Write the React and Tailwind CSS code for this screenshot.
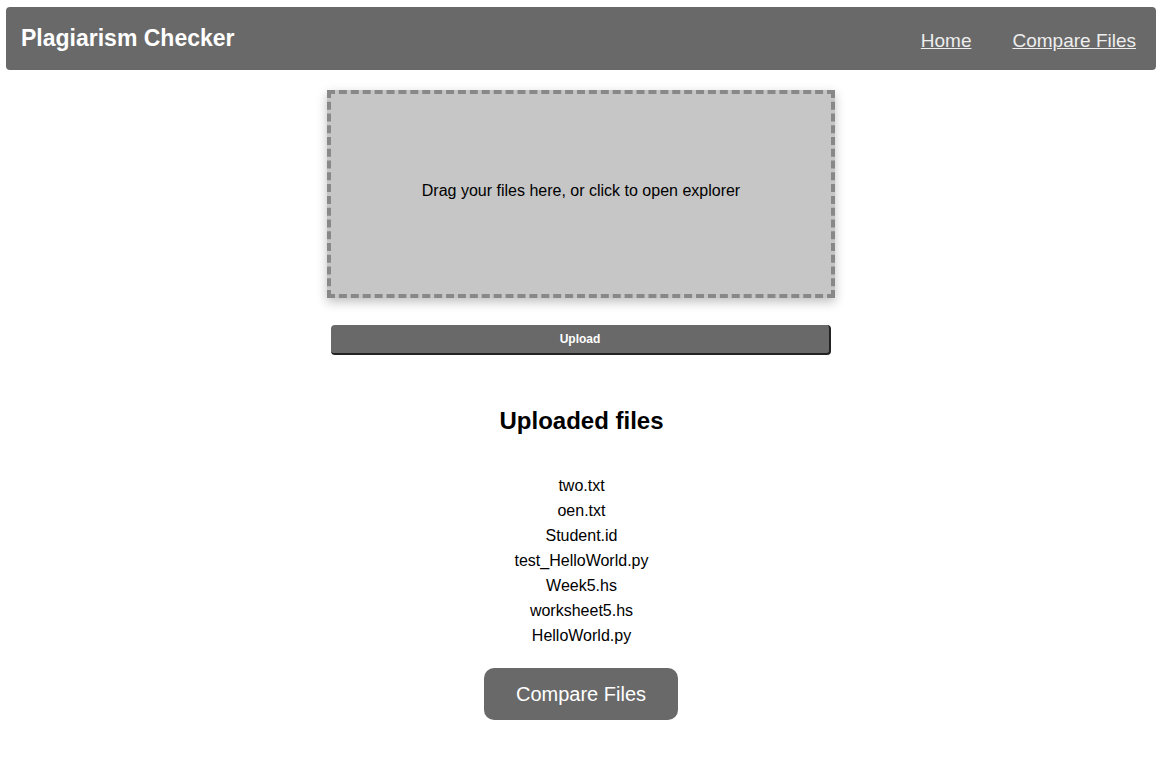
export default function App() {
  const files = [
    'two.txt',
    'oen.txt',
    'Student.id',
    'test_HelloWorld.py',
    'Week5.hs',
    'worksheet5.hs',
    'HelloWorld.py',
  ];

  return (
    <div className="min-h-screen bg-white text-black font-['Liberation_Sans',Arial,sans-serif]">
      {/* Navbar */}
      <nav className="ml-[6px] mr-[7px] pt-[7px]">
        <div className="flex h-[63px] items-center justify-between rounded-[4px] bg-[#696969] pl-[15px] pr-[20px]">
          <h1 className="text-[23px] font-bold leading-none text-white -mt-[1px]">Plagiarism Checker</h1>
          <div className="flex items-center gap-[41px] text-[19px] leading-none text-[#eeeeee] mt-[3px]">
            <a href="#" className="underline">Home</a>
            <a href="#" className="underline">Compare Files</a>
          </div>
        </div>
      </nav>

      <main className="flex flex-col items-center">
        {/* Dropzone */}
        <div className="mt-[20px] -ml-[1px] flex h-[208px] w-[508px] items-center justify-center border-4 border-dashed border-[#888888] bg-[#c6c6c6] shadow-[0_4px_10px_rgba(0,0,0,0.25)]">
          <p className="mb-[6px] text-[16px]">Drag your files here, or click to open explorer</p>
        </div>

        {/* Upload */}
        <button className="mt-[27px] -ml-[1px] h-[30px] w-[500px] rounded-[4px] border-b-2 border-r-2 border-[#222222] bg-[#696969] text-[12px] font-bold text-white">
          Upload
        </button>

        {/* Uploaded files */}
        <h2 className="mt-[52px] text-[24px] font-bold leading-[28px]">Uploaded files</h2>
        <ul className="mt-[38px] flex flex-col items-center text-[16px] leading-[25px]">
          {files.map((f) => (
            <li key={f}>{f}</li>
          ))}
        </ul>

        <button className="mt-[20px] -ml-[1px] h-[52px] w-[194px] rounded-[10px] bg-[#696969] text-[20px] text-white">
          Compare Files
        </button>
      </main>
    </div>
  );
}
